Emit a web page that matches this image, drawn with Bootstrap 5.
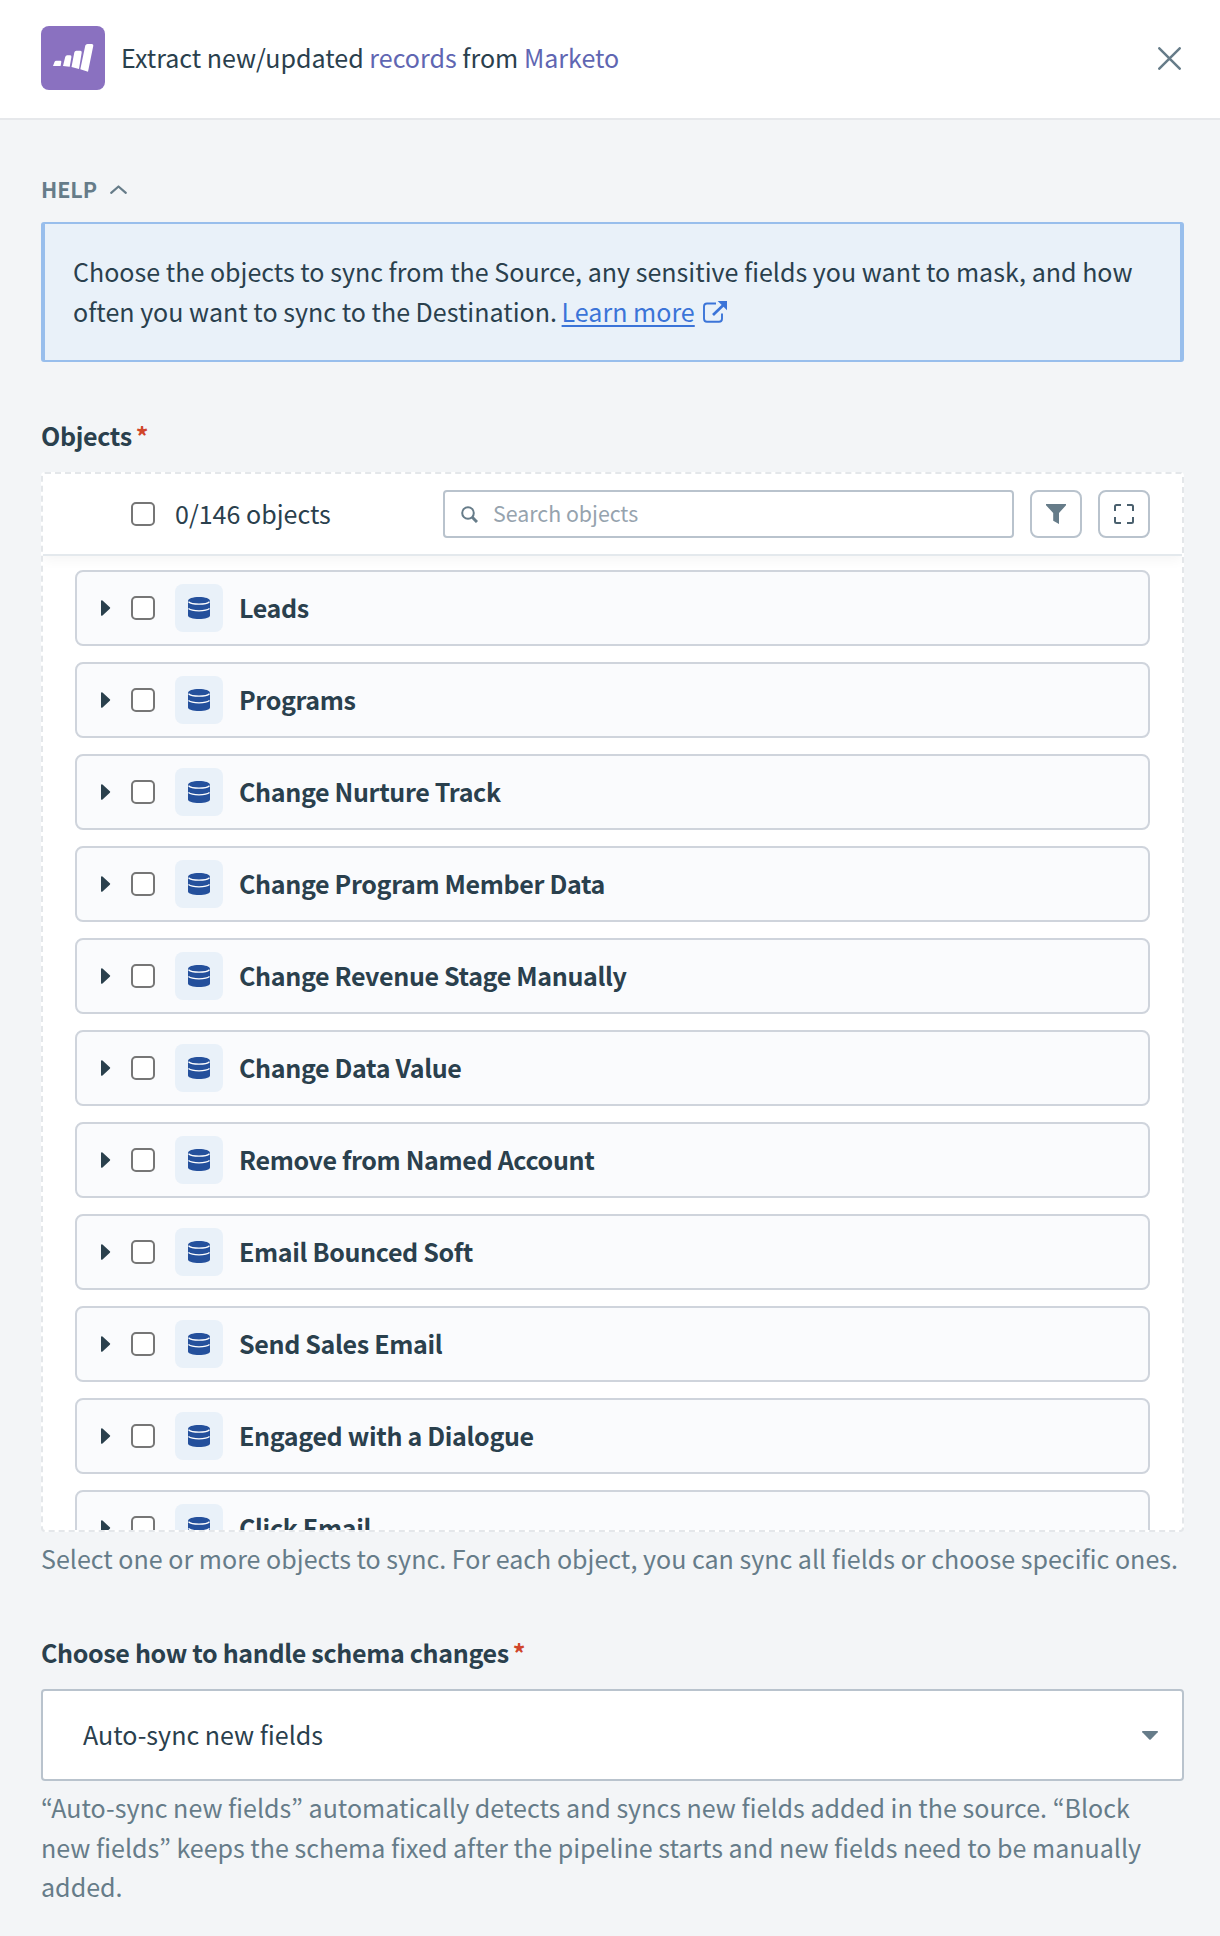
<!DOCTYPE html>
<html lang="en">
<head>
<meta charset="utf-8">
<meta name="viewport" content="width=device-width, initial-scale=1">
<title>Extract new/updated records from Marketo</title>
<link href="https://cdn.jsdelivr.net/npm/bootstrap@5.3.0/dist/css/bootstrap.min.css" rel="stylesheet">
<style>
  body { font-family: "Noto Sans CJK KR", "Noto Sans", sans-serif; font-size: 25.05px; line-height: 40px; color: #2a404d; background: #f3f5f7; height: 1936px; overflow: hidden; }
  svg { display: block; flex: none; }
  .panel-head { height: 120px; padding: 0 39px 2px 41px; border-bottom: 2px solid #e6e8eb; }
  .app-logo { width: 64px; height: 64px; border-radius: 8px; background: #8a71c0; }
  .head-title { margin-left: 16px; padding-bottom: 2px; }
  .head-title span { color: #6066b2; }
  .panel-main { padding: 49px 36px 0 41px; }
  .help-toggle { font-size: 21.5px; font-weight: 700; color: #667c89; gap: 13px; letter-spacing: -.1px; }
  .help-box { margin-top: 13px; height: 140px; padding: 27px 24px 0 28px; background: #e9f1f9; border: solid #98beec; border-width: 2px 4px; border-radius: 3px; }
  .help-box a { margin-left: -1px; color: #3b74d8; text-decoration-thickness: 2px; text-underline-offset: 3px; }
  .help-box svg { display: inline-block; margin-left: 8px; vertical-align: -1px; }
  .strong-text { font-weight: 700; letter-spacing: -.35px; }
  .field-label { margin-top: 53px; margin-bottom: 17px; }
  .req { color: #d0452a; margin-left: 4px; }
  .picker { height: 1060px; border: 2px dashed #e4e7ea; border-radius: 4px; overflow: hidden; background: #fff; }
  .picker-bar { flex: none; height: 82px; padding: 0 32px 0 88px; border-bottom: 2px solid #e4e9ed; box-shadow: 0 4px 12px rgba(0,0,0,.045); }
  .picker-bar .form-check-input, .obj-row .form-check-input { width: 24px; height: 24px; margin: 0; border: 2px solid #767676; border-radius: 5px; flex: none; }
  .obj-count { width: 268px; padding: 0 0 2px 20px; }
  .search-box { width: 571px; height: 48px; border: 2px solid #b9c3cd; border-radius: 4px; padding-left: 16px; gap: 15px; font-size: 21.35px; color: #96a3ae; }
  .search-box span, .obj-row span, .schema-select span { padding-bottom: 2px; }
  .tool-btn { width: 52px; height: 48px; padding: 0; border: 2px solid #b9c3cd; border-radius: 8px; margin-left: 16px; background: #fff; }
  .obj-list { padding: 14px 32px 0; gap: 16px; }
  .obj-row { flex: none; height: 76px; padding-left: 24px; border: 2px solid #cfd4dc; border-radius: 8px; background: #fafbfd; }
  .obj-row .form-check-input { margin-left: 20px; }
  .obj-tile { width: 48px; height: 48px; margin: 0 16px 0 20px; border-radius: 8px; background: #e9f1f9; flex: none; }
  .hint { color: #667c89; padding: 6px 0 1px; }
  .hint-long { line-height: 39.5px; padding-top: 7px; }
  .schema-select { height: 92px; padding: 0 24px 0 40px; border: 2px solid #b9c3cd; border-radius: 4px; background: #fff; }
</style>
<script src="https://cdn.jsdelivr.net/npm/bootstrap@5.3.0/dist/js/bootstrap.bundle.min.js"></script>
</head>
<body>
<svg width="0" height="0" class="position-absolute" aria-hidden="true">
  <symbol id="db" viewBox="0 0 22 22">
    <path fill="#24509c" d="M0 4C0 1.600 4.500 0 11 0s11 1.600 11 4v14.500C22 20.700 17 22 11 22S0 20.700 0 18.500z"/>
    <path fill="none" stroke="#fff" stroke-width="1.300" d="M.5 4.800C2.500 6.700 6 7.200 11 7.200s8.500-.5 10.500-2.400M.5 11.600c2 1.700 5.500 2.300 10.500 2.300s8.500-.6 10.500-2.300"/>
  </symbol>
</svg>

<header class="panel-head bg-white d-flex align-items-center">
  <div class="app-logo">
    <svg width="64" height="64" viewBox="0 0 64 64" fill="#fff">
      <path d="M12 40l1.500-4q.5-1.200 1.800-1.200h4q1.200 0 1 1.200l-.7 4zM22 40l2.200-9q.5-1.800 2-1.800h3q1.500 0 1.200 1.800L28.700 40.800zM30.500 41l2.800-14.500q.4-1.800 2-1.800h4q1.700 0 1.400 1.800L38 43zM39.300 43.200L44.300 19.600q.5-1.700 2.200-1.700h4.200q1.900 0 1.600 1.800L47 45.800z"/>
    </svg>
  </div>
  <div class="head-title">Extract new/updated <span>records</span> from <span>Marketo</span></div>
  <svg class="ms-auto" width="23" height="23" viewBox="0 0 23 23" fill="none" stroke="#667c89" stroke-width="2.500" stroke-linecap="round"><path d="M1.300 1.300l20.400 20.400M21.700 1.300L1.300 21.700"/></svg>
</header>

<main class="panel-main">
  <div class="help-toggle d-flex align-items-center">HELP
    <svg width="17" height="9" viewBox="0 0 17 9" fill="none" stroke="#667c89" stroke-width="2.200" stroke-linecap="round" stroke-linejoin="round"><path d="M1.200 7.800l7.300-6.300 7.300 6.300"/></svg>
  </div>
  <div class="help-box">Choose the objects to sync from the Source, any sensitive fields you want to mask, and how<br>often you want to sync to the Destination. <a href="#">Learn more</a><svg width="24" height="22" viewBox="0 0 24 22" fill="none" stroke="#3b74d8" stroke-width="1.900"><path d="M13 2.500H4Q1 2.500 1 5.500v12Q1 20.800 4 20.800h12q3 0 3-3V12.500"/><path stroke-width="2.700" d="M10 14L21 3.500"/><path fill="#3b74d8" stroke="none" d="M14.700 0H24v9.300z"/></svg></div>

  <div class="field-label strong-text d-flex">Objects<span class="req">*</span></div>
  <section class="picker d-flex flex-column">
    <div class="picker-bar d-flex align-items-center">
      <input class="form-check-input" type="checkbox" aria-label="Select all">
      <div class="obj-count">0/146 objects</div>
      <div class="search-box d-flex align-items-center ms-auto">
        <svg width="17" height="17" viewBox="0 0 17 17" fill="none" stroke="#667c89"><circle cx="7" cy="7" r="5.800" stroke-width="2"/><path stroke-width="3" d="M11 11l5 5"/></svg>
        <span>Search objects</span>
      </div>
      <button class="btn tool-btn d-flex align-items-center justify-content-center" type="button" aria-label="Filter"><svg width="20" height="20" viewBox="0 0 20 20" fill="#667c89"><path d="M0 0h20v1.200L13 9v11L7.200 16.800V9L0 1.200z"/></svg></button>
      <button class="btn tool-btn d-flex align-items-center justify-content-center" type="button" aria-label="Full screen"><svg width="20" height="20" viewBox="0 0 20 20" fill="none" stroke="#4a606e" stroke-width="2"><path d="M1 7V2.500Q1 1 2.500 1H7M13 1h4.500Q19 1 19 2.500V7M19 13v4.500q0 1.500-1.500 1.500H13M7 19H2.500Q1 19 1 17.500V13"/></svg></button>
    </div>
    <div class="obj-list d-flex flex-column" id="objects"></div>
  </section>
  <div class="hint text-nowrap">Select one or more objects to sync. For each object, you can sync all fields or choose specific ones.</div>

  <div class="field-label strong-text d-flex">Choose how to handle schema changes<span class="req">*</span></div>
  <div class="schema-select d-flex align-items-center justify-content-between">
    <span>Auto-sync new fields</span>
    <svg width="16" height="9" viewBox="0 0 16 9" fill="#667c89"><path d="M.6 0h14.800q.9.200.3 1.200L8.700 8.500q-.7.700-1.400 0L.3 1.200Q-.3.200.6 0z"/></svg>
  </div>
  <div class="hint hint-long text-nowrap">“Auto-sync new fields” automatically detects and syncs new fields added in the source. “Block<br>new fields” keeps the schema fixed after the pipeline starts and new fields need to be manually<br>added.</div>
</main>
<script>
  const names = ["Leads", "Programs", "Change Nurture Track", "Change Program Member Data", "Change Revenue Stage Manually", "Change Data Value", "Remove from Named Account", "Email Bounced Soft", "Send Sales Email", "Engaged with a Dialogue", "Click Email"];
  document.getElementById("objects").innerHTML = names.map(n => `
    <div class="obj-row d-flex align-items-center">
      <svg width="10" height="16" viewBox="0 0 10 16" fill="#2a404d"><path d="M0 1Q.3-.4 1.500.5L8.800 7.300q.8.700 0 1.400L1.500 15.500Q.3 16.400 0 15z"/></svg>
      <input class="form-check-input" type="checkbox" aria-label="${n}">
      <div class="obj-tile d-flex align-items-center justify-content-center"><svg width="22" height="22"><use href="#db"/></svg></div>
      <span class="strong-text">${n}</span>
    </div>`).join("");
</script>
</body>
</html>
